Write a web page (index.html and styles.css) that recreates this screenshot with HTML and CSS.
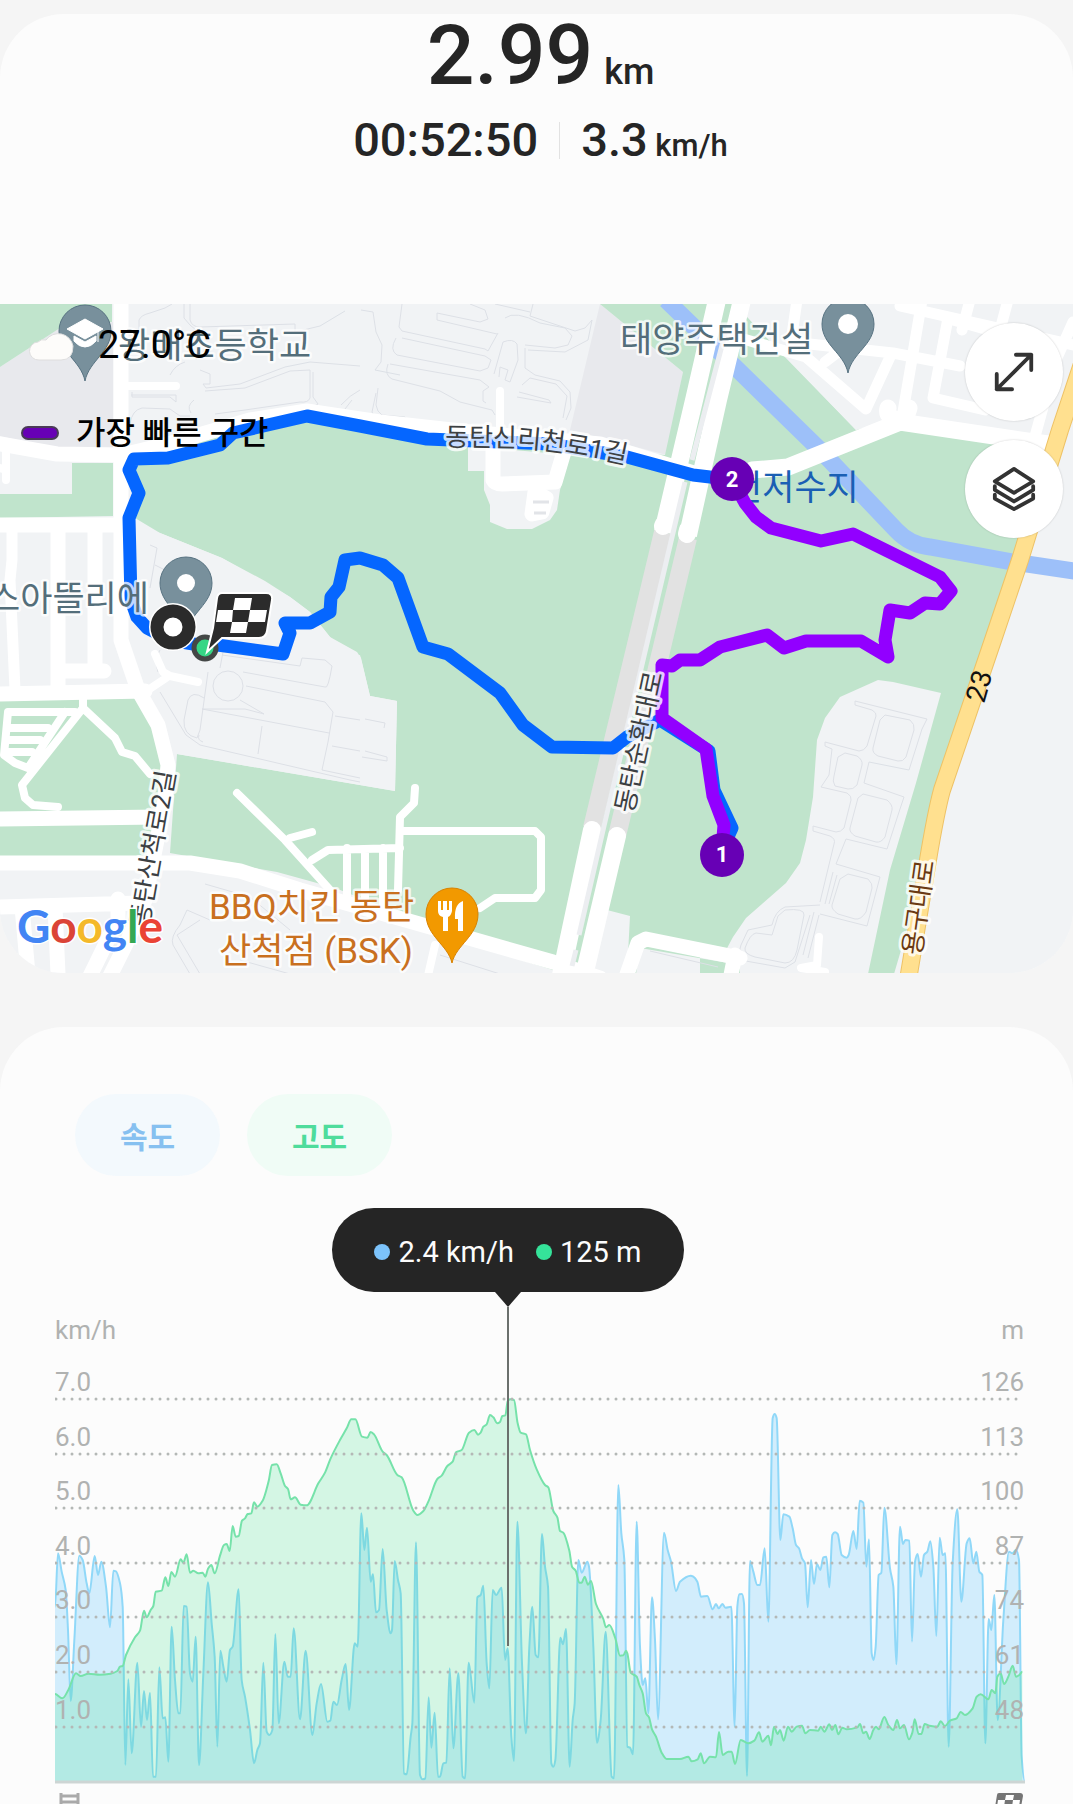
FILE: index.html
```html
<!DOCTYPE html>
<html lang="ko">
<head>
<meta charset="utf-8">
<meta name="viewport" content="width=device-width, initial-scale=1">
<title>걷기 기록</title>
<link rel="stylesheet" href="styles.css">
</head>
<body>
<main class="page">
  <section class="card summary">
    <header class="totals">
      <h1 class="distance">2.99 <span class="distance-unit">km</span></h1>
      <div class="pace">
        <span class="duration">00:52:50</span>
        <span class="divider"></span>
        <span class="speed">3.3 <span class="speed-unit">km/h</span></span>
      </div>
    </header>

    <div class="map">
      <svg class="map-canvas" viewBox="0 304 1073 669" role="img" aria-label="이동 경로 지도">
        <rect class="land" x="0" y="304" width="1073" height="670"/>
        <!-- school grounds and industrial blocks -->
        <path class="zone" d="M0 367L60 328 113 322V455L60 450 0 436zM600 304L683 372 667 455 570 430z"/>
        <!-- parks -->
        <path class="park" d="M0 304H112V322L60 328 0 367zM72 463H113V516L0 518V494H72z"/>
        <path class="park" d="M128 455L307 412 470 440 665 455 683 372 600 304H735L856 430 900 418 1000 440 1050 445 894 974H553L335 888 277 872 170 853 177 754 360 785 395 791 397 701 370 696 360 655 350 657 330 637 310 612 290 597 222 558 160 533 135 518z"/>
        <path class="park" d="M0 700L140 696 165 765 150 856H0z"/>
        <path class="land" d="M130 522L160 533 222 558 265 581 290 597 310 612 330 637 357 652 361 658 370 696 397 701 395 791 177 754 150 690z"/>
        <path class="land" d="M941 693L893 682 878 680 840 697 825 718 817 740 813 797 806 840 800 863 786 883 746 918 733 937 725 952H700V974H868L890 870 916 783zM607 910L630 916 627 974H590zM640 948L740 965V974H636z"/>
        <path class="land" d="M735 304L781 353 856 430 890 418 905 417 1000 445 1060 445 1073 380V304z"/>
        <path class="land" d="M1040 480L1073 440V974H910L928 863 966 723z"/>
        <path class="land" d="M468 446L570 455 560 490 557 510 550 520 532 529 507 529 490 522V505L484 490V471H468z"/>
        <path class="land" d="M0 865H190L280 885 553 970V974H0z"/>

        <!-- plot outlines -->
        <g class="plots">
          <path d="M139 330V320Q141 315 150 313L165 308 172 304M184 304V318Q190 326 196 330V360M190 304V320Q192 327 200 327L295 324V332L320 326 345 311M200 370L210 374V384H203L206 388 240 384 285 367 310 362 360 366M205 391L245 388 290 371 310 370V398Q308 403 300 402L245 410 215 414M194 400Q186 406 191 413M313 372V397L318 404 310 408M170 375Q175 365 185 362M132 392V397H170L176 402V395H131M130 424Q132 410 142 408L170 409 180 416 190 416M341 405Q350 395 360 390M345 409L352 400"/>
          <path d="M361 310L373 312 376 332 382 345 381 362 375 370 400 375M402 304L399 327 402 331 485 349 488 351 498 333M437 313L480 322 488 319 485 310 470 304M437 313V320L497 334M396 338Q389 350 397 355L480 371 488 368 491 360 485 356 402 338M390 364L480 380 489 387 483 391V401L486 403M388 364Q384 375 392 379L440 391 460 402 492 410 495 415M378 388L376 405Q377 412 382 415L405 417V420H376L372 412 376 393M494 374L503 342Q513 338 517 344L518 360 510 382 505 380 508 370 500 367 499 377M505 318Q515 310 540 323L565 328 572 336 568 345 555 348 525 345M525 348V368L535 375 560 381 570 392 571 408 566 420M522 385L530 378 556 384 567 396 563 418M517 397L551 403 549 400 519 392M495 304L530 312M533 304L530 316 575 331 585 328 592 320M592 320L588 340 565 352 528 350"/>
          <path d="M855 701V705L872 710Q877 713 876 716L867 746Q864 751 859 751L825 742V746L832 749 829 775 821 787 847 793Q852 796 851 800L844 828Q841 832 836 832L813 826V831L830 836Q836 839 834 844L820 902M855 701L927 719 922 729 909 770 869 762 864 783 904 797 900 809 887 849 846 839 836 864 880 877 867 926 820 914M885 715L910 720Q915 724 914 730L906 757Q903 762 898 761L878 756Q872 753 873 748L880 720zM845 753L857 756Q863 760 862 765L857 785Q853 790 848 789L835 786Q832 781 834 776L838 757zM863 794L887 800Q893 805 892 810L885 837Q881 843 876 842L855 836Q849 832 850 828L858 798zM848 874L868 879Q873 884 872 888L866 912Q861 920 855 919L838 914Q831 909 832 905L840 879zM833 872L825 904M837 875L829 904M820 905L785 907Q775 911 772 925L748 930 741 945 736 964 740 960 785 968 795 962 810 915M785 910Q805 908 804 915L797 950Q794 963 785 963L755 957Q744 954 745 948Q750 934 756 933L772 935 778 916zM814 912L803 955M819 915L808 958"/>
          <path d="M223 652L220 668M228 671A14 14 0 1 0 228 701 14 14 0 1 0 228 671M243 672L325 687Q328 690 332 666L325 660 302 658 300 666 222 655M246 686L325 702 333 712 328 742 322 770 360 778M240 700L264 714 245 709 202 709 329 733M335 716L360 720M332 746L360 751M208 672L200 730 197 738Q183 735 184 720L188 700Q192 690 204 698M160 692L186 735 200 745 350 780 360 782M262 726L258 754M150 545L157 548 150 588M155 565L175 575M160 650Q154 660 158 672M365 719L385 723 384 728M365 751L387 757V761L362 757M203 742Q197 740 199 735"/>
          <path d="M205 884L250 897 290 930M187 910L180 925Q170 937 173 945L190 974M187 910L210 920M200 920L177 935 200 974M370 950L395 955M240 960L290 974M440 955L500 974M650 951L718 967"/>
        </g>

        <!-- river -->
        <path class="river" d="M666 300L733 365 820 450 896 530Q910 545 930 547L1013 562 1080 572"/>

        <!-- local streets -->
        <g class="streets">
          <path class="w15" d="M121 300V640L138 690 158 725 168 765 165 800 155 850 145 900 128 940 108 980"/>
          <path class="w15" d="M-5 443L57 454 122 455 168 444 250 420 307 411 380 422 470 432 600 444 700 475M0 525H120M0 694L145 691M0 819L160 817M0 863L190 863 240 871 300 890 553 962 600 978"/>
          <path class="w8" d="M128 386H176M6 450V480M0 468L6 470M500 391V440"/>
          <path class="w15" d="M493 446V480Q495 484 502 484L555 482 566 445"/>
          <path class="w15" d="M535 492L546 498 542 512 532 514z"/>
          <path class="w15" d="M58 530V690M95 530V668M65 671H104"/>
          <path class="w11" d="M12 530V560L10 580 15 690"/>
          <path class="w8" d="M155 654L163 672 170 676 198 682M148 690L166 678M83 695V708L22 785 25 798 33 805 58 807M8 712H75M8 712L4 755 15 763 28 768 65 712M8 728H48M8 740H40M8 752H32M83 708L115 738 122 752 135 756 150 774"/>
          <path class="w8" d="M237 793L285 840 330 890M290 838L312 832M312 860L328 850 400 848M347 848V900M383 848V905M415 788L414 803 400 817 398 890M404 831H535L541 837V890L535 898H495L480 908M365 850V900"/>
          <path class="w15" d="M0 907L140 903M22 907L28 974M55 907L58 974M118 899V925M115 925L90 976M625 980L638 943 646 939 740 958M735 955L730 980"/>
          <path class="w8" d="M435 945L427 980M819 937L817 965 801 968 825 972"/>
          <path class="w17" d="M752 470L788 467 900 422 1048 444M905 420Q885 420 888 408M905 420L909 408"/>
          <path class="w11" d="M806 357L866 409 890 357M825 362L846 346M797 300L791 342 893 353 960 366M740 338L806 357M922 300L903 412M948 318L933 398 985 410M946 318L1060 350M900 306L1073 345M1008 300L1000 330M1073 322L1056 360 1034 440M970 300L962 330"/>
        </g>
        <path class="slot" d="M533 502H549M534 513H546"/>

        <!-- highway with its underpass -->
        <path class="highway" d="M717 300L695 396 663 532M742 300L718 400 688 535"/>
        <path class="underpass" d="M663 532L592 828M688 538L617 836"/>
        <path class="highway cap" d="M663 526L664 524M687 534L688 530M592 830L560 980M617 836L583 980"/>
        <path class="median" d="M726 330L692 460M685 482L604 826M604 826L579 935M576 950L572 966"/>
        <path class="trunk-edge" d="M1090 340L1060 430 1020 560 993 640 942 790Q936 812 928 860L908 980"/>
        <path class="trunk" d="M1090 340L1060 430 1020 560 993 640 942 790Q936 812 928 860L908 980"/>

        <!-- place names under the route -->
        <g class="place">
          <text x="118" y="358">왕배초등학교</text>
          <text x="620" y="352">태양주택건설</text>
        </g>
        <text class="place water" x="730" y="500">천저수지</text>

        <!-- walked route -->
        <path class="route" d="M205 646L170 640 147 628 137 617 131 600 129 518 139 493 129 470 134 459 168 458 220 445 233 433 307 416 360 426 427 439 550 444 627 457 693 475 710 477 732 479"/>
        <path class="route" d="M210 644L283 654 290 633 285 623H310L330 612 331 597 339 587 345 560 360 558 383 565 398 578 423 647 448 654 500 693 523 725 552 747 613 748 627 737 660 720 709 751 714 790 732 828 722 850"/>
        <path class="route fast" d="M732 479L745 503 756 517 771 528 821 541 853 534 940 577 951 591 940 604 925 603 910 613 890 610 885 640 888 657 861 641H806L784 648 767 635 720 647 700 660H680L672 666 662 665V718L706 749 713 796 724 825 722 850"/>

        <!-- street names -->
        <path id="st-sin" fill="none" d="M445 446L510 447Q565 449 660 472"/>
        <text class="street-name"><textPath href="#st-sin">동탄신리천로1길</textPath></text>
        <text class="street-name" transform="translate(633 814) rotate(-78)">동탄순환대로</text>
        <text class="street-name" transform="translate(148 928) rotate(-80)">동탄산척로2길</text>
        <text class="street-name trunk-name" transform="translate(921 956) rotate(-82)">용구대로</text>
        <text class="route-no" transform="translate(984 704) rotate(-74)">23</text>
        <text class="place" x="-12" y="611">스아뜰리에</text>
        <g class="place food">
          <text x="209" y="919">BBQ치킨 동탄</text>
          <text x="219" y="963">산척점 (BSK)</text>
        </g>

        <!-- place pins -->
        <path class="pin" d="M85 381C81 361 59 352 59 331A26 26 0 0 1 111 331C111 352 89 361 85 381z"/>
        <path fill="#fff" d="M67 329L85 319 103 329 85 339zM74 336L85 342 96 336V341Q91 347 85 347T74 341zM98 330V342" stroke="#fff" stroke-width="1"/>
        <path class="pin" d="M848 373C844 353 822 345 822 324A26 26 0 0 1 874 324C874 345 852 353 848 373z"/>
        <circle cx="848" cy="324" r="10" fill="#fff"/>
        <path class="pin" d="M186 633C182 613 160 604 160 583A26 26 0 0 1 212 583C212 604 190 613 186 633z"/>
        <circle cx="186" cy="583" r="9" fill="#fff"/>
        <path class="pin pin-food" d="M452 963C448 945 426 936 426 914A26 26 0 0 1 478 914C478 936 456 945 452 963z"/>
        <path fill="#fff" d="M438 901H441V910H443V901H447V910H449V901H452V911Q451 916 448 917V931H443V917Q438 916 438 911zM463 901V931H458V919H455Q454 904 463 901z"/>

        <!-- start, current position and finish -->
        <circle cx="173" cy="627" r="17" fill="#fff" stroke="#fff" stroke-width="14"/>
        <circle cx="173" cy="627" r="16" fill="#fff" stroke="#2b2b2b" stroke-width="13"/>
        <circle cx="205" cy="648" r="11" fill="#36d685" stroke="#444746" stroke-width="5"/>
        <path d="M222 593H266Q273 593 272 600L267 631Q266 638 259 638H222L207 652 213 628 217 598Q218 593 222 593z" fill="#2b2b2b" stroke="#fff" stroke-width="2"/>
        <path fill="#fff" d="M235 598H252L250 610H233zM218 610H233L232 622H216zM250 610H267L265 622H248zM232 622H248L246 633H230z"/>
        <g class="split">
          <circle cx="722" cy="855" r="22"/><text x="722" y="862">1</text>
          <circle cx="732" cy="479" r="22"/><text x="732" y="487">2</text>
        </g>

        <text class="google" x="17" y="943"><tspan fill="#4285f4">G</tspan><tspan fill="#db4437">o</tspan><tspan fill="#f4b92a">o</tspan><tspan fill="#4285f4">g</tspan><tspan fill="#34a853">l</tspan><tspan fill="#ea4335">e</tspan></text>
      </svg>

      <div class="map-info">
        <div class="weather">
          <svg class="cloud" viewBox="0 0 46 32" aria-hidden="true"><path d="M11 31A9 9 0 0 1 10 13 8 8 0 0 1 18 11 15 15 0 0 1 45 17Q45 31 33 31z" fill="#fdfcfa" stroke="#dedede" stroke-width="1"/></svg>
          <span>27.0°C</span>
        </div>
        <div class="legend"><span class="legend-mark"></span>가장 빠른 구간</div>
      </div>

      <div class="map-tools">
        <button type="button" class="tool" aria-label="지도 확대">
          <svg viewBox="0 0 48 48"><path d="M6 42L42 6M26 6H42V22M6 26V42H22"/></svg>
        </button>
        <button type="button" class="tool" aria-label="지도 유형">
          <svg viewBox="0 0 48 48"><path d="M24 3L44 16 24 28 4 16zM4 21V25L24 37 44 25V21M4 30V34L24 45 44 34V30"/></svg>
        </button>
      </div>
    </div>
  </section>

  <section class="card details">
    <div class="chips">
      <button type="button" class="chip chip-speed">속도</button>
      <button type="button" class="chip chip-height">고도</button>
    </div>
    <div class="chart">
      <div class="tooltip">
        <span class="reading reading-speed">2.4 km/h</span>
        <span class="reading reading-height">125 m</span>
      </div>
      <svg class="plot" viewBox="0 0 970 497" role="img" aria-label="속도와 고도 그래프">
        <path id="speed-area" class="area-speed"/>
        <path id="speed-line" class="line-speed"/>
        <path id="height-area" class="area-height"/>
        <path id="height-line" class="line-height"/>
        <g id="grid"></g>
        <path class="axis" d="M0 475H970"/>
        <path class="cursor" d="M453 0V339"/>
        <text class="tick" x="0" y="32">km/h</text>
        <text class="tick" x="969" y="32" text-anchor="end">m</text>
        <path d="M6 486V500M23 486V500M6 489H23M6 495H23" fill="none" stroke="#aaa" stroke-width="3"/>
        <path d="M944 486H965Q968 486 968 489L966 500H940L942 488Q942 486 944 486z" fill="#757575"/>
        <path d="M951 488H959L958 493H950zM943 493H950L949 500H942zM958 493H965L964 500H957z" fill="#fff"/>
      </svg>
    </div>
  </section>
</main>
<script src="chart.js"></script>
</body>
</html>
```
FILE: styles.css
```css
* { box-sizing: border-box; }

body {
  margin: 0;
  background: #f5f5f5;
  color: #252525;
  font-family: Roboto, "Noto Sans CJK KR", sans-serif;
}

button { border: 0; padding: 0; font: inherit; cursor: pointer; }

.page {
  display: flex;
  flex-direction: column;
  gap: 54px;
  padding-top: 14px;
}

.card {
  background: #fcfcfc;
  border-radius: 64px;
}

.totals {
  display: flex;
  flex-direction: column;
  align-items: center;
  gap: 12px;
  padding-bottom: 134px;
  padding-left: 8px;
}

.distance {
  margin: 0;
  font-size: 84px;
  line-height: 84px;
  font-weight: 500;
}

.distance-unit { margin-left: -10px; font-size: 36px; line-height: 1; }

.pace {
  display: flex;
  align-items: center;
  gap: 21px;
  font-size: 47px;
  line-height: 60px;
  font-weight: 500;
}

.divider { width: 1px; height: 37px; background: #e2e2e2; }

.speed-unit { margin-left: -4px; font-size: 31px; line-height: 1; }

/* Map */
.map { position: relative; overflow: hidden; border-radius: 0 0 64px 64px; }
.map-canvas { display: block; width: 100%; height: auto; }

.land { fill: #f1f3f5; }
.zone { fill: #e8e9ed; }
.park { fill: #c0e4cc; }
.plots { fill: none; stroke: #dde0e6; stroke-width: 1; }
.river { fill: none; stroke: #9dc0f9; stroke-width: 17; }
.streets { fill: none; stroke: #fff; stroke-linejoin: round; stroke-linecap: round; }
.slot { stroke: #e2e4e8; stroke-width: 3; }
.w8 { stroke-width: 8; }
.w11 { stroke-width: 11; }
.w15 { stroke-width: 15; }
.w17 { stroke-width: 17; }
.highway { fill: none; stroke: #fff; stroke-width: 18; }
.cap { stroke-linecap: round; }
.underpass { fill: none; stroke: #e2e2e2; stroke-width: 18; }
.median { fill: none; stroke: #eceef1; stroke-width: 5; }
.trunk-edge { fill: none; stroke: #eec266; stroke-width: 18; }
.trunk { fill: none; stroke: #ffe08f; stroke-width: 16; }
.route { fill: none; stroke: #0566ff; stroke-width: 13; stroke-linejoin: round; stroke-linecap: round; }
.fast { stroke: #9200ff; }

.place {
  fill: #546e7a;
  font-size: 35px;
  stroke: rgba(255, 255, 255, .75);
  stroke-width: 5;
  stroke-linejoin: round;
  paint-order: stroke;
}
.water { fill: #1a5fb4; stroke: none; }
.food { fill: #c9701f; }
.street-name {
  fill: #3c4043;
  font-size: 26px;
  stroke: rgba(255, 255, 255, .8);
  stroke-width: 6;
  stroke-linejoin: round;
  paint-order: stroke;
}
.trunk-name { fill: #6b3a12; }
.route-no { fill: #111; font-size: 28px; }
.pin { fill: #78909c; stroke: #587382; stroke-width: 1; }
.pin-food { fill: #f29900; stroke: #d98200; }
.split circle { fill: #6700b5; }
.split text { fill: #fff; font-size: 22px; font-weight: 700; text-anchor: middle; }
.google {
  font-family: Lato, sans-serif;
  font-size: 46px;
  font-weight: 700;
  stroke: #fff;
  stroke-width: 3;
  paint-order: stroke;
}

.map-info {
  position: absolute;
  top: 19px;
  left: 21px;
  display: flex;
  flex-direction: column;
  gap: 42px;
  color: #000;
}

.weather {
  display: flex;
  align-items: center;
  gap: 24px;
  padding-left: 7px;
  font-size: 38px;
  line-height: 44px;
}

.cloud { width: 46px; height: 32px; }

.legend {
  display: flex;
  align-items: center;
  gap: 17px;
  font-size: 32px;
  line-height: 48px;
  font-weight: 500;
}

.legend-mark {
  width: 38px;
  height: 14px;
  border: 2px solid #4a3b57;
  border-radius: 7px;
  background: #6700b5;
}

.map-tools {
  position: absolute;
  top: 19px;
  right: 10px;
  display: flex;
  flex-direction: column;
  gap: 19px;
}

.tool {
  display: flex;
  align-items: center;
  justify-content: center;
  width: 98px;
  height: 98px;
  border-radius: 50%;
  background: #fff;
  box-shadow: 0 0 2px rgba(0, 0, 0, .2);
}

.tool svg {
  width: 46px;
  height: 46px;
  fill: none;
  stroke: #333;
  stroke-width: 4;
  stroke-linecap: round;
  stroke-linejoin: round;
}

/* Chart */
.details {
  padding: 67px 48px 0 55px;
  border-radius: 64px 64px 0 0;
}

.chips { display: flex; gap: 27px; padding-left: 20px; }

.chip {
  width: 145px;
  height: 82px;
  border-radius: 41px;
  font-size: 30px;
  font-weight: 700;
}
.chip-speed { background: #f3f9fd; color: #86c0f0; }
.chip-height { background: #f0fcf6; color: #4fdc9c; }

.chart { position: relative; padding-top: 131px; }

.tooltip {
  position: absolute;
  top: 32px;
  left: 453px;
  display: flex;
  align-items: center;
  justify-content: center;
  gap: 22px;
  width: 352px;
  height: 84px;
  padding-top: 4px;
  border-radius: 42px;
  background: #252525;
  color: #fcfcfc;
  font-size: 29px;
  transform: translateX(-50%);
}
.tooltip::after {
  content: "";
  position: absolute;
  top: 100%;
  left: 50%;
  margin-left: -13px;
  border: 13px solid transparent;
  border-top: 15px solid #252525;
  border-bottom: 0;
}

.reading { display: flex; align-items: center; gap: 8px; }
.reading::before { content: ""; width: 16px; height: 16px; border-radius: 50%; }
.reading-speed::before { background: #7cc3fb; }
.reading-height::before { background: #35e39a; }

.plot { display: block; width: 100%; height: auto; }
.area-speed { fill: rgba(47, 182, 255, .2); }
.area-height { fill: rgba(57, 227, 137, .2); }
.line-speed { fill: none; stroke: #90d8f8; stroke-width: 2; stroke-linejoin: round; }
.line-height { fill: none; stroke: #76e2aa; stroke-width: 2; stroke-linejoin: round; }
.dots { fill: none; stroke: #b4b8b6; stroke-width: 3; stroke-linecap: round; stroke-dasharray: 0 8; }
.axis { stroke: #cdd5d4; stroke-width: 3; }
.cursor { stroke: #6b706d; stroke-width: 2; }
.tick { fill: #b0b2b1; font-size: 26px; }
```
FILE: chart.js
```js
const RUN = 990;

const speed = [
  [45,680,54,520,65,575,77,630,84,750,92,963,103,780,118,527,128,540,140,610,148,640,164,528,174,585,184,545,198,620,210,742,220,572,228,574,240,610,248,680,256,1155,265,898,275,1120,292,848,303,1040,312,933,321,1020,330,938,339,1190,348,1190,358,862,368,1015,376,1012,385,1145,395,740,405,900,415,1000,421,1000,431,678,440,680,450,880,458,905,467,770,477,1155,490,880,504,607,515,730,524,830,532,1100,541,812,550,860,560,905,570,810,578,800,596,628,605,900,615,950,630,1050,642,1150,652,1110,660,1090,670,848,680,1055,688,1065,697,1050,706,762,716,1030,733,845,743,890,752,890,761,745,780,1018,797,812,817,1065,830,970,843,912,862,1025,871,1022,880,965,891,975,905,900,917,852,927,990,944,790,953,800,964,400,973,510,981,443,992,605,999,583],
  [18,697,27,690,38,507,50,690,62,760,66,750,74,543,84,600,92,640,102,1180,110,1183,122,1070,127,1030,138,487,150,1185,158,1198,166,1195,176,952,184,1103,194,998,204,1190,210,1190,220,1150,229,1148,239,865,250,1105,265,880,278,1190,285,1195,296,848,313,968,322,652,332,645,340,617,350,850,358,925,368,630,378,645,395,623,405,840,413,805,424,1070,432,1143,442,425,456,850,468,1060,478,800,487,680,497,825,505,832,516,462,525,560,534,620,544,1150,550,1160,556,1140,571,773,579,793,588,747,599,1160,608,1020,614,970,625,540,635,578,652,545,657,560,670,800,681,1088,692,1020,707,755,725,1190,732,1195,745,315,754,460,763,540,772,1100,780,1103,789,1123,800,425,810,800,818,915,826,895,835,1000,846,652,855,780,864,1018,882,458,893,510,903,545,918,633,930,605,962,587,970,590,982,605,993,650,1012,648],
  [38,688,48,672,56,685,67,672,76,683,94,680,104,1040,112,680,118,643,126,642,132,670,141,1188,150,543,160,575,172,615,180,615,194,505,205,725,218,115,224,102,230,115,241,480,250,403,268,410,278,445,288,495,297,505,306,535,315,550,323,682,333,540,342,612,351,552,361,570,370,532,379,530,388,622,397,465,405,457,413,462,425,525,440,533,446,525,460,453,470,507,479,362,490,368,499,560,507,478,515,820,521,840,527,800,536,585,544,578,553,383,570,565,580,620,589,853,600,440,609,492,616,480,628,482,636,785,645,545,653,522,663,590,672,525,682,515,691,484,700,560,709,768,719,473,728,525,736,520,746,1100,758,550,772,388,784,665,800,490,809,475,820,550,829,515,838,575,847,585,856,1090,866,717,874,750,883,645,893,1020,910,720,927,515,937,520,948,510,957,540,965,1130,974,1202]
];

const height = [
  [45,942,67,955,85,930,108,880,122,888,145,881,180,884,212,881,232,873,240,860,248,858,258,825,285,772,300,752,312,692,320,712,332,690,340,678,347,635,365,632,376,592,385,618,394,576,405,590,422,538,430,548,440,523,450,578,460,572,475,580,488,578,496,590,504,566,514,555,524,580,540,527,552,495,560,492,569,513,578,438,587,470,596,468,606,422,615,415,623,402,634,400,642,367,652,380,668,362,686,303,696,255,710,253,722,280,735,318,744,327,752,358,765,352,782,374,800,376,835,310,855,278,872,235,900,180,920,145,934,118,946,118,966,170,982,173,992,156],
  [12,163,38,215,50,225,82,285,95,292,130,392,142,405,160,393,175,365,202,297,215,287,232,258,248,245,258,217,275,210,297,158,313,150,324,164,332,158,340,140,350,133,360,105,370,112,382,130,390,126,397,108,406,106,413,64,420,58,432,60,443,130,452,158,468,163,480,210,500,268,525,315,535,322,550,393,562,412,570,453,580,458,598,512,606,560,617,572,628,608,635,608,644,590,654,614,663,603,678,672,700,717,708,742,718,735,736,775,750,827,760,826,768,812,772,820,782,878,800,890,808,915,818,940,828,1000,837,1012,846,1048,858,1070,875,1118,890,1137,930,1137,955,1130,965,1144,983,1138,992,1120,1002,1150],
  [30,1130,48,1132,57,1056,68,1125,85,1115,95,1115,105,1152,122,1080,145,1090,163,1082,177,1057,187,1085,205,1067,213,1096,222,1040,233,1062,240,1050,251,1082,264,1040,275,1055,290,1040,306,1037,316,1060,330,1050,355,1052,362,1040,373,1055,388,1033,396,1050,406,1035,415,1063,427,1043,440,1048,472,1042,480,1032,490,1060,498,1055,509,1077,520,1050,528,1040,536,1048,553,1011,565,1035,580,1050,591,1020,600,1045,612,1035,627,1078,637,1058,644,1018,656,1062,664,1062,674,1032,688,1037,712,1040,722,1024,735,1038,750,1022,770,1015,782,996,795,1005,818,985,830,950,842,943,865,958,875,930,886,940,892,890,902,880,912,912,925,890,938,857,948,890,958,885,967,875]
];

function toPoints(runs) {
  const points = [];
  runs.forEach((run, n) => {
    for (let i = 0; i < run.length; i += 2) {
      points.push([(run[i] - 45 + n * RUN) / 3, run[i + 1] / 3 + 73]);
    }
  });
  return points;
}

// Monotone cubic curve: smooth, without overshooting the samples.
function curve(p) {
  const slope = p.slice(1).map((q, i) => (q[1] - p[i][1]) / (q[0] - p[i][0]));
  const tangent = p.map((_, i) => {
    if (i === 0 || i === p.length - 1) return 0;
    const a = slope[i - 1], b = slope[i];
    return a * b <= 0 ? 0 : 2 * a * b / (a + b);
  });
  let d = `M${p[0][0]} ${p[0][1]}`;
  for (let i = 1; i < p.length; i++) {
    const [x0, y0] = p[i - 1], [x1, y1] = p[i], h = (x1 - x0) / 3;
    d += `C${x0 + h} ${y0 + tangent[i - 1] * h} ${x1 - h} ${y1 - tangent[i] * h} ${x1} ${y1}`;
  }
  return d;
}

function draw(name, runs) {
  const points = toPoints(runs);
  const d = curve(points);
  document.getElementById(`${name}-line`).setAttribute("d", d);
  document.getElementById(`${name}-area`)
    .setAttribute("d", `${d}V474H${points[0][0]}Z`);
}

draw("speed", speed);
draw("height", height);

const left = ["7.0", "6.0", "5.0", "4.0", "3.0", "2.0", "1.0"];
const right = ["126", "113", "100", "87", "74", "61", "48"];
document.getElementById("grid").innerHTML = left.map((label, i) => {
  const y = Math.round(92 + i * 54.6);
  return `<path class="dots" d="M1 ${y}H969"/>
    <text class="tick" x="0" y="${y - 8}">${label}</text>
    <text class="tick" x="969" y="${y - 8}" text-anchor="end">${right[i]}</text>`;
}).join("");
```
